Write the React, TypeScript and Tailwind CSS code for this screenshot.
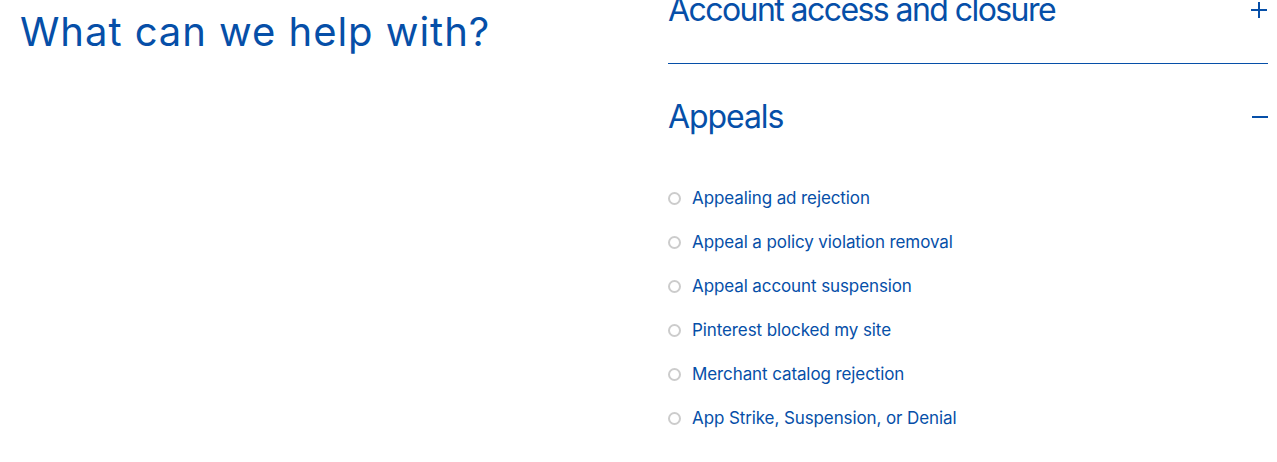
import React from "react";

const items = [
  "Appealing ad rejection",
  "Appeal a policy violation removal",
  "Appeal account suspension",
  "Pinterest blocked my site",
  "Merchant catalog rejection",
  "App Strike, Suspension, or Denial",
];

export default function App() {
  return (
    <div
      className="w-[1277px] h-[462px] overflow-hidden bg-white flex text-[#064fa8]"
      style={{ fontFamily: "Inter, 'Noto Sans', sans-serif" }}
    >
      <div className="flex-1 pl-[20px] pt-[8px]">
        <h1 className="text-[40px] leading-[48px] font-normal tracking-[0.024em]">
          What can we help with?
        </h1>
      </div>
      <div className="w-[600px] mr-[9px] shrink-0 -mt-[44px]">
        <div className="h-[108px] flex items-center justify-between border-b border-[#064fa8]">
          <span className="text-[32px] leading-none tracking-[-0.049em]">
            Account access and closure
          </span>
          <span className="relative w-[16px] h-[16px] mr-[1px]">
            <span className="absolute left-0 right-0 top-[7px] h-[2px] bg-[#064fa8]" />
            <span className="absolute top-0 bottom-0 left-[7px] w-[2px] bg-[#064fa8]" />
          </span>
        </div>
        <div className="h-[106px] flex items-center justify-between">
          <span className="text-[32px] leading-none tracking-[-0.034em]">Appeals</span>
          <span className="relative w-[16px] h-[16px]">
            <span className="absolute left-0 right-0 top-[7px] h-[2px] bg-[#064fa8]" />
          </span>
        </div>
        <ul className="pt-[6px]">
          {items.map((t) => (
            <li key={t} className="h-[44px] flex items-center gap-[11px]">
              <span className="w-[13px] h-[13px] rounded-full border-2 border-[#cccccc] shrink-0" />
              <span className="text-[17px] leading-none tracking-[-0.006em]">{t}</span>
            </li>
          ))}
        </ul>
      </div>
    </div>
  );
}
